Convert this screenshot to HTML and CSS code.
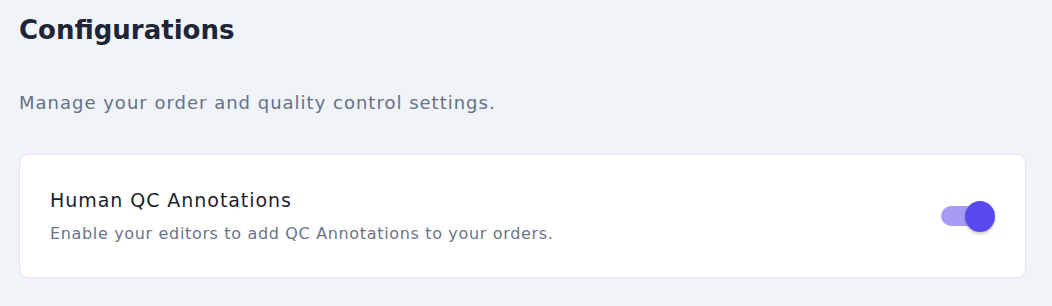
FILE: index.html
```html
<!DOCTYPE html>
<html lang="en">
<head>
<meta charset="utf-8">
<title>Configurations</title>
<link rel="stylesheet" href="styles.css">
</head>
<body>
<main class="page">
  <h1 class="title">Configurations</h1>
  <p class="subtitle">Manage your order and quality control settings.</p>
  <section class="card">
    <div class="card-text">
      <h2 class="card-title">Human QC Annotations</h2>
      <p class="card-desc">Enable your editors to add QC Annotations to your orders.</p>
    </div>
    <div class="toggle" role="switch" aria-checked="true">
      <span class="toggle-track"></span>
      <span class="toggle-knob"></span>
    </div>
  </section>
</main>
</body>
</html>
```

FILE: styles.css
```css
html, body {
  margin: 0;
  padding: 0;
  background: #f0f3f8;
}
body {
  font-family: "DejaVu Sans", "Noto Sans", sans-serif;
  color: #1e2436;
}
.page {
  padding: 12px 26px 0 19px;
}
.title {
  margin: 0;
  font-size: 26px;
  font-weight: 700;
  line-height: 36px;
  color: #1e2538;
}
.subtitle {
  margin: 43px 0 0;
  font-size: 18px;
  line-height: 24px;
  letter-spacing: 1px;
  color: #667188;
}
.card {
  margin-top: 39px;
  background: #ffffff;
  border: 1px solid #e3e7ee;
  border-radius: 10px;
  height: 124px;
  box-sizing: border-box;
  display: flex;
  align-items: center;
  justify-content: space-between;
  padding: 0 30px 0 30px;
}
.card-title {
  margin: 0;
  font-size: 19px;
  font-weight: 400;
  line-height: 24px;
  letter-spacing: 0.95px;
  color: #1b1f2e;
}
.card-desc {
  margin: 12px 0 0;
  font-size: 16px;
  line-height: 20px;
  letter-spacing: 0.66px;
  color: #6b7489;
}
.toggle {
  position: relative;
  width: 54px;
  height: 31px;
  display: flex;
  align-items: center;
}
.toggle-track {
  width: 40px;
  height: 20px;
  border-radius: 10px;
  background: #a79cf5;
}
.toggle-knob {
  position: absolute;
  right: 0;
  top: 0;
  width: 30px;
  height: 31px;
  border-radius: 50%;
  background: #5a48ef;
  box-shadow: 0 2px 3px rgba(60, 50, 0, 0.25);
}
```
